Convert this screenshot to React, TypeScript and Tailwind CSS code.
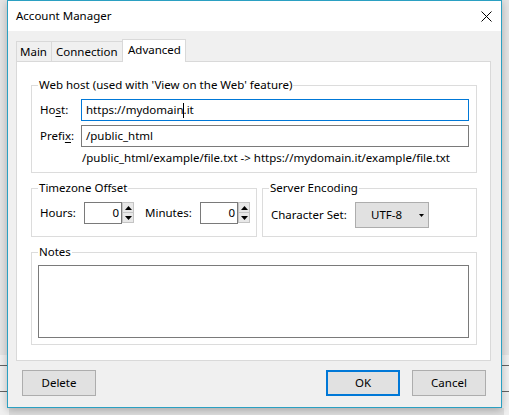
import { type ReactNode } from 'react'

function GroupBox({
  title,
  className,
  children,
}: {
  title: string
  className?: string
  children: ReactNode
}) {
  return (
    <fieldset className={`border border-[#dcdcdc] pl-[8px] ${className ?? ''}`}>
      <legend className="-ml-[2px] bg-white px-[1px] leading-[16px]">{title}</legend>
      {children}
    </fieldset>
  )
}

function SpinBox({ value }: { value: string }) {
  return (
    <div className="flex items-start">
      <div className="flex h-[22px] w-[38px] items-center justify-end border border-[#7a7a7a] bg-white pr-[2px]">
        {value}
      </div>
      <div className="flex h-[21px] w-[12px] flex-col border border-[#c4c4c4] bg-[#e8e8e8]">
        <div className="flex flex-1 items-center justify-center border-b border-[#c4c4c4]">
          <svg width="7" height="4" viewBox="0 0 7 4">
            <path d="M0 4 L3.5 0 L7 4 Z" fill="#000" />
          </svg>
        </div>
        <div className="flex flex-1 items-center justify-center">
          <svg width="7" height="4" viewBox="0 0 7 4">
            <path d="M0 0 L3.5 4 L7 0 Z" fill="#000" />
          </svg>
        </div>
      </div>
    </div>
  )
}

function DialogButton({
  children,
  primary,
  className,
}: {
  children: ReactNode
  primary?: boolean
  className?: string
}) {
  return (
    <button
      className={`flex h-[26px] w-[74px] items-center justify-center bg-[#e1e1e1] ${
        primary ? 'border-2 border-[#0078d7]' : 'border border-[#adadad]'
      } ${className ?? ''}`}
    >
      {children}
    </button>
  )
}

export default function App() {
  return (
    <div className="relative h-[415px] w-[509px] overflow-hidden bg-[#f0f0f0] font-['Noto_Sans',sans-serif] text-[11.5px] text-black">
      {/* desktop behind the dialog */}
      <div className="absolute left-0 top-0 h-[355px] w-full bg-[#e4e4e4]" />
      <div className="absolute left-0 top-[365px] h-px w-full bg-[#646464]" />
      <div className="absolute left-0 top-[391px] h-px w-full bg-[#646464]" />
      <div className="absolute left-[9px] top-[408px] h-[7px] w-[495px] bg-[#dedede]" />

      <div className="absolute left-[7px] top-0 flex h-[408px] w-[495px] flex-col border border-[#2ba0c2] bg-[#f0f0f0] shadow-[0_2px_8px_rgba(0,0,0,0.25)]">
        <div className="flex h-[30px] items-center justify-between bg-white pl-[8px] pr-[9px]">
          <span className="text-[11.5px]">Account Manager</span>
          <svg width="11" height="11" viewBox="0 0 11 11">
            <path d="M0.5 0.5 L10.5 10.5 M10.5 0.5 L0.5 10.5" stroke="#000" strokeWidth="1" />
          </svg>
        </div>

        <div className="flex flex-1 flex-col pt-[8px]">
          <div className="ml-[8px] flex h-[22px] items-end">
            <div className="flex h-[20px] w-[35px] items-center border-l border-t border-[#d9d9d9] pl-[3px]">
              Main
            </div>
            <div className="flex h-[20px] w-[71px] items-center border-l border-t border-[#d9d9d9] pl-[4px]">
              Connection
            </div>
            <div className="relative z-10 -mb-px flex h-[23px] w-[64px] items-center border-x border-t border-[#d9d9d9] bg-white pb-[2px] pl-[5px]">
              Advanced
            </div>
          </div>

          <div className="ml-[8px] flex h-[300px] w-[475px] flex-col border border-[#d9d9d9] bg-white pl-[14px] pr-[13px]">
            <GroupBox
              title="Web host (used with 'View on the Web' feature)"
              className="mt-[15px] pb-[6px] pr-[7px]"
            >
              <div className="mt-[6px] flex items-center">
                <span className="w-[41px]">
                  Ho<span className="underline underline-offset-2">s</span>t:
                </span>
                <div className="flex h-[22px] flex-1 items-center border border-[#0078d7] pl-[4px]">
                  https://mydomain
                  <span className="-ml-px inline-block h-[15px] w-px bg-black" />
                  .it
                </div>
              </div>
              <div className="mt-[4px] flex items-center">
                <span className="w-[41px]">
                  Prefi<span className="underline underline-offset-2">x</span>:
                </span>
                <div className="flex h-[22px] flex-1 items-center border border-[#7a7a7a] pl-[4px]">
                  /public_html
                </div>
              </div>
              <div className="mt-[3px] pl-[42px] leading-[16px]">
                /public_html/example/file.txt -&gt; https://mydomain.it/example/file.txt
              </div>
            </GroupBox>

            <div className="mt-[7px] flex gap-[5px]">
              <GroupBox title="Timezone Offset" className="w-[226px] pb-[12px]">
                <div className="mt-[6px] flex items-center">
                  <span className="w-[44px]">Hours:</span>
                  <SpinBox value="0" />
                  <span className="ml-[11px] w-[55px]">Minutes:</span>
                  <SpinBox value="0" />
                </div>
              </GroupBox>
              <GroupBox title="Server Encoding" className="w-[215px] pb-[8px]">
                <div className="mt-[6px] flex items-center">
                  <span className="w-[84px]">Character Set:</span>
                  <div className="flex h-[26px] w-[74px] items-center border border-[#adadad] bg-[#e1e1e1] pl-[15px]">
                    <span>UTF-8</span>
                    <svg className="ml-[17px]" width="5" height="3" viewBox="0 0 5 3">
                      <path d="M0 0 L5 0 L2.5 3 Z" fill="#000" />
                    </svg>
                  </div>
                </div>
              </GroupBox>
            </div>

            <GroupBox title="Notes" className="mt-[7px] pb-[6px] pr-[7px]">
              <div className="-ml-[2px] mt-[5px] h-[73px] border border-[#7a7a7a] bg-white" />
            </GroupBox>
          </div>

          <div className="mt-[9px] flex items-center pl-[14px] pr-[15px]">
            <DialogButton>Delete</DialogButton>
            <div className="flex-1" />
            <DialogButton primary className="w-[73px]">
              OK
            </DialogButton>
            <DialogButton className="ml-[12px]">Cancel</DialogButton>
          </div>
        </div>
      </div>
    </div>
  )
}
